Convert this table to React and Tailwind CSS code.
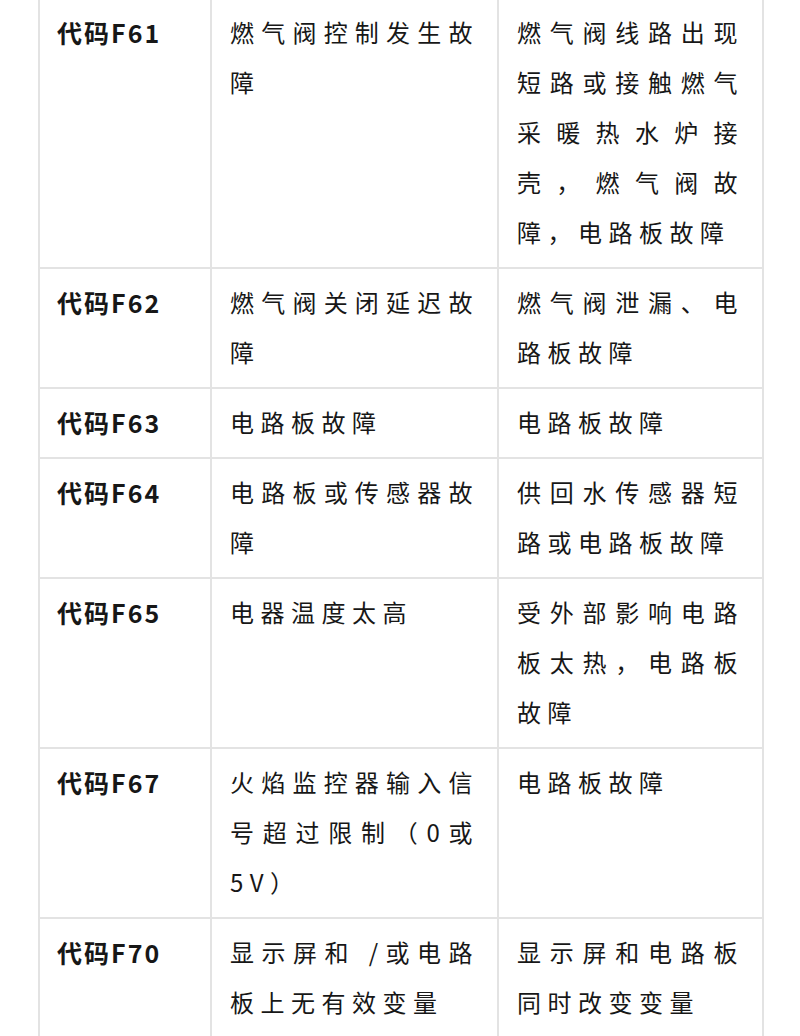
const rows = [
  { code: '代码F61', fault: '燃气阀控制发生故障', cause: '燃气阀线路出现短路或接触燃气采暖热水炉接壳，燃气阀故障，电路板故障' },
  { code: '代码F62', fault: '燃气阀关闭延迟故障', cause: '燃气阀泄漏、电路板故障' },
  { code: '代码F63', fault: '电路板故障', cause: '电路板故障' },
  { code: '代码F64', fault: '电路板或传感器故障', cause: '供回水传感器短路或电路板故障' },
  { code: '代码F65', fault: '电器温度太高', cause: '受外部影响电路板太热，电路板故障' },
  { code: '代码F67', fault: '火焰监控器输入信号超过限制（0或5V）', cause: '电路板故障' },
  { code: '代码F70', fault: '显示屏和 /或电路板上无有效变量', cause: '显示屏和电路板同时改变变量' },
]

export default function App() {
  return (
    <div
      className="min-h-screen bg-white text-[#171717] overflow-hidden"
      style={{ fontFamily: '"Noto Sans CJK SC", "Noto Sans", sans-serif' }}
    >
      <div className="ml-[38px] mt-[-1px] w-[726px] border-l-2 border-[#e3e3e3]">
        {rows.map((r) => (
          <div key={r.code} className="grid grid-cols-[172px_287px_265px] border-b-2 border-[#e3e3e3]">
            <div className="border-r-2 border-[#e3e3e3] pl-[17px] pr-[8px] pt-[8px] pb-[10px] text-[25px] leading-[50px] font-bold tracking-[2px]">
              {r.code}
            </div>
            <div className="border-r-2 border-[#e3e3e3] pl-[18px] pr-[18px] pt-[8px] pb-[10px] text-[24px] leading-[50px] tracking-[6.5px] text-justify">
              {r.fault}
            </div>
            <div className="border-r-2 border-[#e3e3e3] pl-[18px] pr-[18px] pt-[8px] pb-[10px] text-[24px] leading-[50px] tracking-[6.5px] text-justify">
              {r.cause}
            </div>
          </div>
        ))}
      </div>
    </div>
  )
}
